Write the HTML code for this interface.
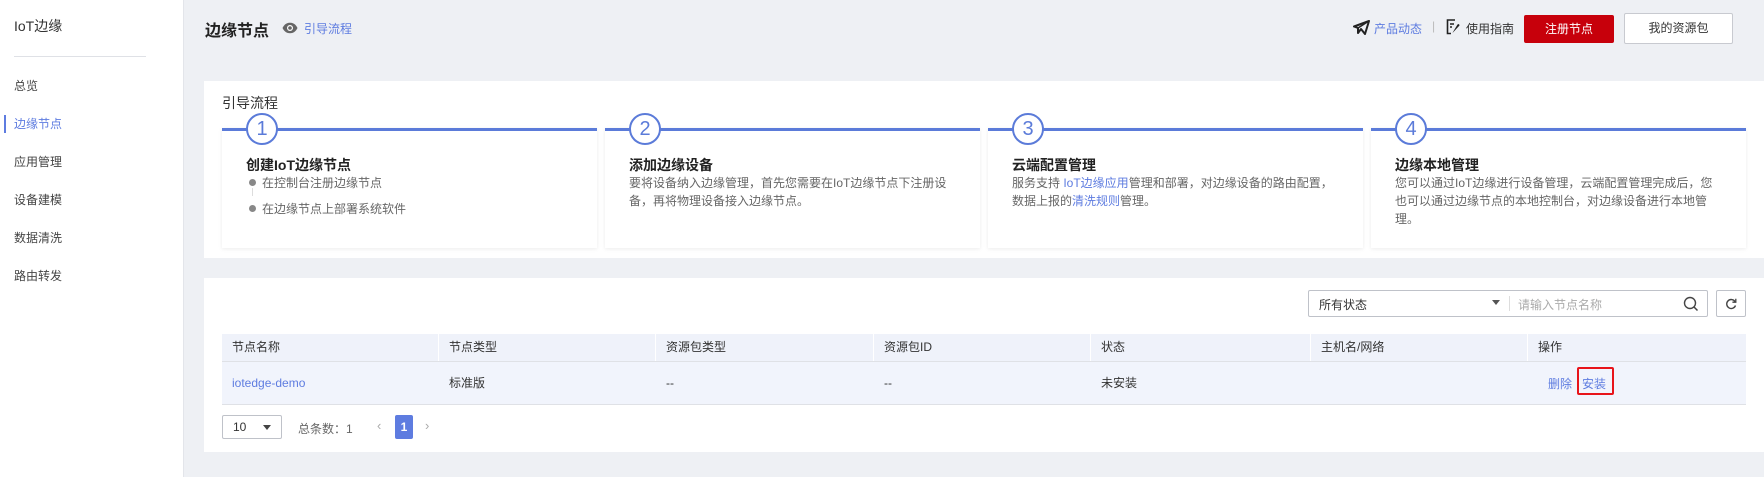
<!DOCTYPE html>
<html><head><meta charset="utf-8">
<style>
*{margin:0;padding:0;box-sizing:border-box}
body{width:1764px;height:477px;overflow:hidden;background:#eef0f4;font-family:"Liberation Sans","Noto Sans CJK SC",sans-serif;color:#333;position:relative}
.a{position:absolute;white-space:nowrap}
.side{position:absolute;left:0;top:0;width:184px;height:477px;background:#fff;border-right:1px solid #e3e5ea}
.menu{position:absolute;left:14px;font-size:12px;color:#444;line-height:16px}
.link{color:#5e7ce0}
.card{position:absolute;background:#fff}
.step{position:absolute;top:128px;width:375px;height:120px;background:#fff;border-top:3px solid #5b7bd9;box-shadow:0 1px 4px rgba(0,0,0,.08)}
.circ{position:absolute;left:24px;top:-18px;width:32px;height:32px;border:2px solid #5b7bd9;border-radius:50%;background:#fff;color:#5b7bd9;font-size:20px;text-align:center;line-height:28px}
.st{position:absolute;left:24px;top:24px;font-size:14px;font-weight:bold;color:#222}
.sd{position:absolute;left:24px;top:43px;font-size:12px;color:#666;line-height:18px;white-space:nowrap}
.th{position:absolute;top:334px;height:27px;background:#eff2fa;font-size:12px;line-height:27px;padding-left:10px;border-right:1px solid #fff}
.td{position:absolute;top:362px;height:42px;font-size:12px;line-height:42px;padding-left:10px}
</style></head><body>
<div class="side">
  <div class="a" style="left:14px;top:16px;font-size:14px;color:#333">IoT边缘</div>
  <div class="a" style="left:14px;top:56px;width:132px;height:1px;background:#dfe1e6"></div>
  <div class="menu" style="top:78px">总览</div>
  <div style="position:absolute;left:4px;top:115px;width:2px;height:18px;background:#5e7ce0"></div>
  <div class="menu" style="top:116px;color:#5e7ce0">边缘节点</div>
  <div class="menu" style="top:154px">应用管理</div>
  <div class="menu" style="top:192px">设备建模</div>
  <div class="menu" style="top:230px">数据清洗</div>
  <div class="menu" style="top:268px">路由转发</div>
</div>

<div class="a" style="left:205px;top:17px;font-size:16px;font-weight:bold;color:#222">边缘节点</div>
<svg class="a" style="left:282px;top:22px" width="16" height="12" viewBox="0 0 16 12"><path d="M0.5 6C2.5 2 5 0.8 8 0.8S13.5 2 15.5 6C13.5 10 11 11.2 8 11.2S2.5 10 0.5 6Z" fill="#666"/><circle cx="8" cy="6" r="3" fill="#fff"/><circle cx="8" cy="6" r="1.8" fill="#666"/></svg>
<div class="a link" style="left:304px;top:20px;font-size:12px">引导流程</div>

<svg class="a" style="left:1353px;top:20px" width="17" height="15" viewBox="0 0 17 15"><path d="M1 6.5L16 1L12 14L8 9L5 13L5 8Z" fill="none" stroke="#222" stroke-width="2" stroke-linejoin="round"/><path d="M5 8L16 1" stroke="#222" stroke-width="1.5"/></svg>
<div class="a link" style="left:1374px;top:20px;font-size:12px">产品动态</div>
<div class="a" style="left:1432px;top:19px;font-size:12px;color:#bbb">|</div>
<svg class="a" style="left:1446px;top:19px" width="15" height="16" viewBox="0 0 15 16"><path d="M9 1H1.5V14.5H5" fill="none" stroke="#222" stroke-width="1.6"/><path d="M4 5H8M4 8H6" stroke="#222" stroke-width="1.4"/><path d="M6.5 14L13.5 6.5L13 5L11.5 5.5L7 13Z" fill="#222"/></svg>
<div class="a" style="left:1466px;top:20px;font-size:12px;color:#333">使用指南</div>
<div class="a" style="left:1524px;top:15px;width:90px;height:28px;background:#c7000b;border-radius:2px;color:#fff;font-size:12px;text-align:center;line-height:28px">注册节点</div>
<div class="a" style="left:1624px;top:13px;width:109px;height:31px;background:#fff;border:1px solid #c8cad0;border-radius:2px;color:#333;font-size:12px;text-align:center;line-height:29px">我的资源包</div>

<div class="card" style="left:204px;top:81px;width:1560px;height:177px">
  <div class="a" style="left:18px;top:12px;font-size:14px;color:#333">引导流程</div>
</div>
<div class="step" style="left:222px">
  <div class="circ">1</div>
  <div class="st">创建IoT边缘节点</div>
  <div style="position:absolute;left:27px;top:48px;width:7px;height:7px;border-radius:50%;background:#888"></div>
  <div style="position:absolute;left:30px;top:57px;width:1px;height:8px;background:#ddd"></div>
  <div style="position:absolute;left:27px;top:74px;width:7px;height:7px;border-radius:50%;background:#888"></div>
  <div class="sd" style="left:40px;top:43px">在控制台注册边缘节点</div>
  <div class="sd" style="left:40px;top:69px">在边缘节点上部署系统软件</div>
</div>
<div class="step" style="left:605px">
  <div class="circ">2</div>
  <div class="st">添加边缘设备</div>
  <div class="sd">要将设备纳入边缘管理，首先您需要在IoT边缘节点下注册设<br>备，再将物理设备接入边缘节点。</div>
</div>
<div class="step" style="left:988px">
  <div class="circ">3</div>
  <div class="st">云端配置管理</div>
  <div class="sd">服务支持 <span class="link">IoT边缘应用</span>管理和部署，对边缘设备的路由配置，<br>数据上报的<span class="link">清洗规则</span>管理。</div>
</div>
<div class="step" style="left:1371px">
  <div class="circ">4</div>
  <div class="st">边缘本地管理</div>
  <div class="sd">您可以通过IoT边缘进行设备管理，云端配置管理完成后，您<br>也可以通过边缘节点的本地控制台，对边缘设备进行本地管<br>理。</div>
</div>

<div class="card" style="left:204px;top:278px;width:1560px;height:174px"></div>
<div class="a" style="left:1308px;top:290px;width:400px;height:27px;border:1px solid #bfc2c9;background:#fff;border-radius:2px"></div>
<div class="a" style="left:1319px;top:296px;font-size:12px;color:#333">所有状态</div>
<div class="a" style="left:1492px;top:300px;width:0;height:0;border-left:4px solid transparent;border-right:4px solid transparent;border-top:5px solid #555"></div>
<div class="a" style="left:1509px;top:296px;width:1px;height:15px;background:#ddd"></div>
<div class="a" style="left:1518px;top:296px;font-size:12px;color:#aaa">请输入节点名称</div>
<svg class="a" style="left:1683px;top:296px" width="16" height="16" viewBox="0 0 16 16"><circle cx="7" cy="7" r="5.5" fill="none" stroke="#444" stroke-width="1.4"/><path d="M11 11L14.5 14.5" stroke="#444" stroke-width="1.5"/></svg>
<div class="a" style="left:1716px;top:290px;width:30px;height:27px;border:1px solid #bfc2c9;background:#fff;border-radius:2px"></div>
<svg class="a" style="left:1725px;top:298px" width="12" height="12" viewBox="0 0 12 12"><path d="M10 3.5A4.5 4.5 0 1 0 10.5 7.5" fill="none" stroke="#444" stroke-width="1.4"/><path d="M10.8 0.8V4.2H7.4" fill="none" stroke="#444" stroke-width="1.3"/></svg>

<div class="th" style="left:222px;width:217px">节点名称</div>
<div class="th" style="left:439px;width:217px">节点类型</div>
<div class="th" style="left:656px;width:218px">资源包类型</div>
<div class="th" style="left:874px;width:217px">资源包ID</div>
<div class="th" style="left:1091px;width:220px">状态</div>
<div class="th" style="left:1311px;width:217px">主机名/网络</div>
<div class="th" style="left:1528px;width:218px;border-right:0">操作</div>
<div class="a" style="left:222px;top:361px;width:1524px;height:1px;background:#dfe1e6"></div>
<div class="a" style="left:222px;top:362px;width:1524px;height:42px;background:#f1f4fc"></div>
<div class="a" style="left:222px;top:404px;width:1524px;height:1px;background:#dfe1e6"></div>
<div class="td link" style="left:222px">iotedge-demo</div>
<div class="td" style="left:439px">标准版</div>
<div class="td" style="left:656px">--</div>
<div class="td" style="left:874px">--</div>
<div class="td" style="left:1091px">未安装</div>
<div class="a link" style="left:1548px;top:375px;font-size:12px">删除</div>
<div class="a" style="left:1577px;top:367px;width:37px;height:28px;border:2px solid #e8141a;border-radius:2px"></div>
<div class="a link" style="left:1582px;top:375px;font-size:12px">安装</div>

<div class="a" style="left:222px;top:415px;width:60px;height:24px;border:1px solid #bfc2c9;border-radius:2px;background:#fff"></div>
<div class="a" style="left:233px;top:420px;font-size:12px;color:#333">10</div>
<div class="a" style="left:263px;top:425px;width:0;height:0;border-left:4px solid transparent;border-right:4px solid transparent;border-top:5px solid #444"></div>
<div class="a" style="left:298px;top:420px;font-size:12px;color:#666">总条数：1</div>
<div class="a" style="left:377px;top:418px;font-size:13px;color:#aaa">‹</div>
<div class="a" style="left:395px;top:415px;width:18px;height:24px;background:#5e7ce0;border-radius:2px;color:#fff;font-size:12px;font-weight:bold;text-align:center;line-height:24px">1</div>
<div class="a" style="left:425px;top:418px;font-size:13px;color:#aaa">›</div>
</body></html>
